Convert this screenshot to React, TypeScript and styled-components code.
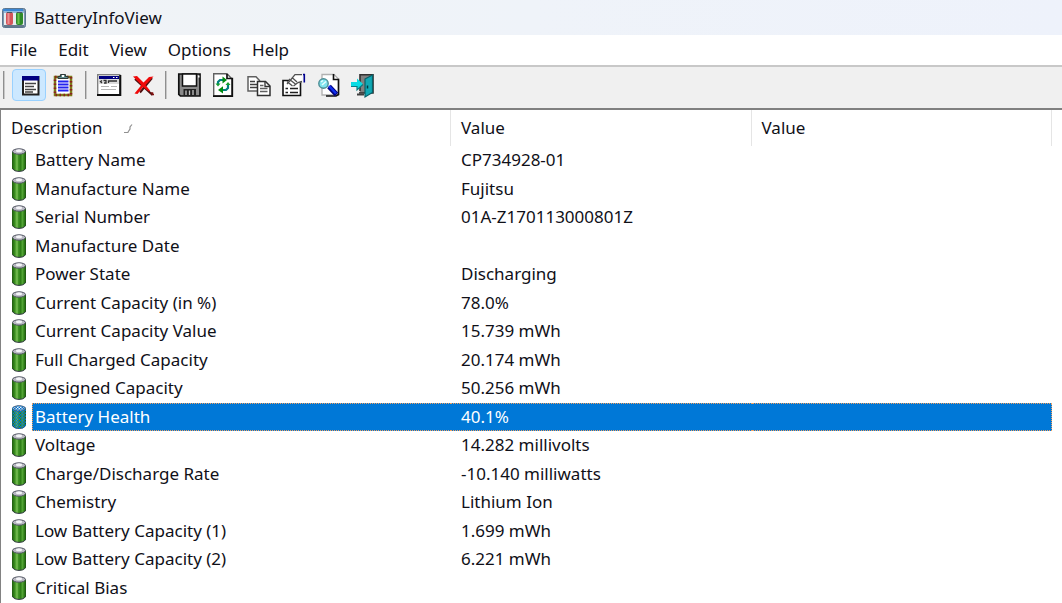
import React, { useState } from "react";
import styled, { createGlobalStyle } from "styled-components";

const GlobalStyle = createGlobalStyle`
  * { box-sizing: border-box; }
  body {
    margin: 0;
    overflow: hidden;
    background: #ffffff;
    color: #101018;
    font-family: "Noto Sans", "Open Sans", sans-serif;
    font-size: 17px;
  }
  button { font: inherit; color: inherit; }
`;

const Window = styled.main`
  display: flex;
  flex-direction: column;
  min-height: 100vh;
`;

const TitleBar = styled.header`
  display: flex;
  align-items: center;
  gap: 8px;
  height: 35px;
  padding-left: 2px;
  background: linear-gradient(90deg, #f0f3f6 0%, #eff3f9 50%, #eef2fb 100%);
`;

const Title = styled.h1`
  margin: 0;
  font-size: 17px;
  font-weight: 400;
  line-height: 24px;
`;

const MenuBar = styled.nav`
  display: flex;
  gap: 1px;
  height: 30px;
`;

const MenuItem = styled.button`
  padding: 0 10px;
  border: 0;
  background: transparent;
  line-height: 28px;
`;

const ToolBar = styled.div`
  display: flex;
  align-items: center;
  gap: 1px;
  height: 45px;
  padding-bottom: 6px;
  border-top: 2px solid #c8c8c8;
  border-bottom: 2px solid #808080;
  background: #f0f0f0;
`;

const Separator = styled.span`
  width: 2px;
  height: 28px;
  margin: 0 4px 0 3px;
  border-left: 1px solid #8f8f8f;
  border-right: 1px solid #c8c8c8;
`;

const Grip = styled(Separator)`
  margin-right: 6px;
`;

const ToolButton = styled.button<{ $active?: boolean }>`
  display: grid;
  place-items: center;
  width: 34px;
  height: 32px;
  padding: 0;
  border: 1px solid ${(p) => (p.$active ? "#99d1ff" : "transparent")};
  border-radius: 4px;
  background: ${(p) => (p.$active ? "#cce8ff" : "transparent")};
`;

const ToolGlyph = styled.svg`
  width: 24px;
  height: 24px;
  overflow: visible;
`;

const ListFrame = styled.section`
  flex: 1;
  border-left: 1px solid #828282;
`;

const List = styled.table`
  width: calc(100% - 10px);
  border-collapse: separate;
  border-spacing: 0;
  table-layout: fixed;
`;

const DescriptionColumn = styled.col`
  width: 450px;
`;

const HeadCell = styled.th`
  height: 36px;
  padding: 0 0 0 10px;
  border-right: 1px solid #e5e5e5;
  font-weight: 400;
  line-height: 24px;
  text-align: left;
`;

const SortMark = styled.svg`
  margin-left: 22px;
`;

const Row = styled.tr<{ $selected: boolean }>`
  height: 28px;
  color: ${(p) => (p.$selected ? "#ffffff" : "inherit")};
  &:nth-child(odd) { height: 29px; }
`;

const Cell = styled.td<{ $selected: boolean }>`
  padding: 0 0 0 10px;
  border: 1px dotted ${(p) => (p.$selected ? "#f0a060" : "transparent")};
  border-left: 0;
  background: ${(p) => (p.$selected ? "#0078d7" : "transparent")};
  line-height: 26px;
  vertical-align: top;
  white-space: nowrap;
  &:not(:last-child) { border-right: 0; }
`;

const NameCell = styled.td`
  padding: 0;
  vertical-align: top;
`;

const NameLine = styled.div`
  display: flex;
  align-items: center;
  padding-left: 10px;
`;

const Name = styled.span<{ $selected: boolean }>`
  flex: 1;
  height: 28px;
  margin-left: 5px;
  padding-left: 2px;
  border: 1px dotted ${(p) => (p.$selected ? "#f0a060" : "transparent")};
  border-right: 0;
  background: ${(p) => (p.$selected ? "#0078d7" : "transparent")};
  line-height: 26px;
  white-space: nowrap;
`;

const BatterySvg = styled.svg`
  flex: none;
`;

function AppIcon() {
  return (
    <svg width="24" height="20" viewBox="0 0 24 20" aria-hidden="true">
      <rect x="0.5" y="0.5" width="23" height="19" rx="2" fill="#7d96ad" stroke="#5b7690" />
      <path d="M1 2H21" stroke="#3a86d4" strokeWidth="2" />
      <path d="M2 4H22" stroke="#8fb8dd" strokeWidth="2" />
      <rect x="2" y="5" width="20" height="12" fill="#e6edef" />
      <rect x="4" y="4" width="7" height="13" rx="2" fill="#d5555a" />
      <path d="M6.500 5V16" stroke="#ee9094" strokeWidth="2" />
      <rect x="14" y="4" width="7" height="13" rx="2" fill="#2f8a28" />
      <path d="M16.500 5V16" stroke="#6cc44a" strokeWidth="2" />
      <path d="M5 4.500H10M15 4.500H20" stroke="#4c5660" />
      <path d="M2 18H22" stroke="#64798c" strokeWidth="2" />
    </svg>
  );
}

function BatteryDefs() {
  return (
    <svg width="0" height="0" style={{ position: "absolute" }} aria-hidden="true">
      <defs>
        <linearGradient id="cell" x1="0" x2="1" y1="0" y2="0">
          <stop offset="0" stopColor="#1f5a10" />
          <stop offset="0.2" stopColor="#3a8f1e" />
          <stop offset="0.36" stopColor="#7cc257" />
          <stop offset="0.46" stopColor="#3f9424" />
          <stop offset="0.62" stopColor="#2c7c16" />
          <stop offset="0.74" stopColor="#55a637" />
          <stop offset="0.88" stopColor="#2f7d18" />
          <stop offset="1" stopColor="#1b4d10" />
        </linearGradient>
        <pattern id="dither" width="3" height="3" patternUnits="userSpaceOnUse">
          <rect width="1.500" height="1.500" fill="#0078d7" />
          <rect x="1.500" y="1.500" width="1.500" height="1.500" fill="#0078d7" />
        </pattern>
      </defs>
    </svg>
  );
}

function BatteryIcon({ selected }: { selected: boolean }) {
  return (
    <BatterySvg width="16" height="24" viewBox="0 0 16 24" aria-hidden="true">
      <path d="M1 3.500V20.500Q2.500 23.500 8 23.500T15 20.500V3.500Z" fill="url(#cell)" />
      <path d="M1.500 20.500Q3 23.500 8 23.500T14.500 20.500" fill="none" stroke="#3b3f4c" />
      <ellipse cx="8" cy="3.500" rx="6.500" ry="2.700" fill="#b9b9c2" stroke="#4f5360" />
      <ellipse cx="8" cy="2.800" rx="3" ry="1.500" fill="#f4f4f8" />
      {selected && <path d="M1 3Q3 0.500 8 0.500T15 3V20.500Q13.500 24 8 24T1 20.500Z" fill="url(#dither)" />}
    </BatterySvg>
  );
}

type Tool = { label: string; active?: boolean; art: React.ReactNode };

const toolGroups: Tool[][] = [
  [
    {
      label: "Details view",
      active: true,
      art: (
        <>
          <rect x="6" y="4" width="15.500" height="17.500" fill="#fff" stroke="#202020" strokeWidth="2" />
          <rect x="5" y="3" width="17" height="4.500" fill="#000080" />
          <path d="M8 10.500H19M8 13.500H17M8 16.500H19M8 19H16" stroke="#454545" strokeWidth="1.300" />
        </>
      ),
    },
    {
      label: "Report",
      art: (
        <>
          <rect x="3" y="4" width="16" height="18" fill="#fff" stroke="#7d7a18" strokeWidth="2.500" />
          <rect x="3" y="4" width="16" height="18" fill="none" stroke="#8b2020" strokeWidth="2.500" strokeDasharray="1.500 2.500" />
          <path d="M6 8.500H16.500M6 11.500H16.500M6 14.500H16.500M6 17.500H16.500" stroke="#2424f0" strokeWidth="1.800" />
          <path d="M6 5.500V3.500H8.500V1.500H13.500V3.500H16V5.500Z" fill="#5f8f8f" stroke="#303838" />
          <rect x="10" y="2" width="2" height="2" fill="#fff" />
        </>
      ),
    },
  ],
  [
    {
      label: "Properties window",
      art: (
        <>
          <rect x="0.700" y="1.700" width="22" height="20" fill="#fff" stroke="#808080" strokeWidth="1.400" />
          <path d="M0 22H23.300V2" fill="none" stroke="#101010" strokeWidth="2" />
          <rect x="2" y="3" width="20" height="3" fill="#000080" />
          <path d="M16 4.500H17.500M19 4.500H20.500" stroke="#fff" />
          <rect x="2" y="6" width="20" height="5" fill="#dcdcdc" />
          <path d="M5 7.500L3.500 8.500L5 10M6.500 7.500H9V10H7M11.500 10V8H20" fill="none" stroke="#303030" strokeWidth="1.300" />
          <path d="M4 13.500H12M14 13.500H20M4 16.500H19" stroke="#b4b4b4" />
        </>
      ),
    },
    {
      label: "Delete",
      art: (
        <>
          <path d="M3 6L20.500 22M20 5L8 19.500" fill="none" stroke="#501010" strokeWidth="2" />
          <path d="M1 3.500L5 3L11.500 9.500L17 4L21.500 3.500L13.500 12L18 17.500L17 18.500L11 14L5.500 21L2.500 20.500L9.500 12Z" fill="#f00808" />
          <path d="M19 20H20.500V21.500H22" fill="none" stroke="#801010" strokeWidth="1.500" />
        </>
      ),
    },
  ],
  [
    {
      label: "Save",
      art: (
        <>
          <path d="M1.800 1H23V23H3.500L1.800 21.300Z" fill="#8a8a8a" stroke="#101010" strokeWidth="1.700" />
          <rect x="5.500" y="1" width="14" height="12" fill="#fff" stroke="#101010" strokeWidth="1.500" />
          <rect x="21" y="2.500" width="1.500" height="2" fill="#fff" />
          <path d="M6.500 23V16H19V23Z" fill="#202020" />
          <path d="M9 17.500V22M12.500 17.500V22M16 17V22" stroke="#c4c4c4" strokeWidth="1.300" />
        </>
      ),
    },
    {
      label: "Refresh",
      art: (
        <>
          <path d="M1.700 0.800H15L20 6V23H1.700Z" fill="#fff" stroke="#606060" strokeWidth="1.400" />
          <path d="M1 23.200H20.300V5.500H15V1" fill="none" stroke="#101010" strokeWidth="1.700" />
          <path d="M6 12V9L8 7H11" fill="none" stroke="#008080" strokeWidth="2.200" />
          <path d="M10.500 3.500L15 7L10.500 10.500Z" fill="#008a10" />
          <path d="M16 11V15L14 17H11" fill="none" stroke="#008080" strokeWidth="2.200" />
          <path d="M11 13.200V20.500L6 17Z" fill="#008a10" />
          <path d="M3.500 10.500H8.500L6 13.500ZM13.500 12L16 9L18.500 12Z" fill="#18a030" />
        </>
      ),
    },
    {
      label: "Copy",
      art: (
        <>
          <path d="M1 3.700H9L12.500 7.500V18H1Z" fill="#fff" stroke="#606060" strokeWidth="1.500" />
          <path d="M3 8.500H8M3 11.500H10M3 14.500H10" stroke="#404040" strokeWidth="1.300" />
          <path d="M10.500 8.500H18.500L23 13V22.500H10.500Z" fill="#fff" stroke="#303030" strokeWidth="1.500" />
          <path d="M18 8.500V13.500H23" fill="none" stroke="#303030" strokeWidth="1.300" />
          <path d="M13 12.500H16.500M13 15.500H20.500M13 18.500H20.500" stroke="#606060" strokeWidth="1.300" />
        </>
      ),
    },
    {
      label: "Properties",
      art: (
        <>
          <path d="M1 7.500H18.500V22.500H1Z" fill="#fff" stroke="#101010" strokeWidth="1.600" />
          <path d="M3.500 15.500H6M8 15.500H16M3.500 19.500H6M8 19.500H16" stroke="#202020" strokeWidth="1.700" />
          <path d="M4 10L9 6L12 2.500L14 1.500H20.500V8.500L17 10L12 11L11 13L9.500 12L7 13.500L5.500 12Z" fill="#fff" />
          <path d="M5 11L9 6.500L13 1.700H20M20 8.500L16 9.500L11.500 13M7 6L14 11.500M10 4.500L15 9M5 8.500L10.500 13" fill="none" stroke="#505050" strokeWidth="1.300" />
          <path d="M22.300 1V9.500M21 1.500H23" stroke="#000090" strokeWidth="1.600" />
        </>
      ),
    },
    {
      label: "Find",
      art: (
        <>
          <path d="M5 1.500H17L21.500 6V22H5Z" fill="#fff" stroke="#b0b0b0" strokeWidth="1.300" />
          <path d="M16.500 1V6.500H21.500V21.500L19 23H9" fill="none" stroke="#101010" strokeWidth="1.600" />
          <path d="M12 13.500L19.500 21.500" stroke="#000080" strokeWidth="5" />
          <path d="M12 13L19 20.500" stroke="#1030f0" strokeWidth="2.500" />
          <circle cx="6.500" cy="10.500" r="4.700" fill="#80e4ee" stroke="#4b8c94" strokeWidth="1.400" />
          <path d="M4 9L6 7.500M5 12L9 8.500" stroke="#e8ffff" strokeWidth="1.500" />
        </>
      ),
    },
    {
      label: "Exit",
      art: (
        <>
          <path d="M8 18V1.700H21V20H7" fill="#808080" stroke="#303030" strokeWidth="1.600" />
          <path d="M5 21.500H12" stroke="#404040" strokeWidth="2" />
          <path d="M13 6L20.500 2V19.500L13 24Z" fill="#10a8b4" stroke="#086068" strokeWidth="1.200" />
          <path d="M15.500 12.500V15.500" stroke="#003840" strokeWidth="1.500" />
          <path d="M-1 9H5V5.500L11 11L5 16.500V13H-1Z" fill="#08dce4" />
          <path d="M-1 13.500H5V17L11 11.500" fill="none" stroke="#087c84" strokeWidth="1.200" />
        </>
      ),
    },
  ],
];

const menus = ["File", "Edit", "View", "Options", "Help"];

const rows: [string, string][] = [
  ["Battery Name", "CP734928-01"],
  ["Manufacture Name", "Fujitsu"],
  ["Serial Number", "01A-Z170113000801Z"],
  ["Manufacture Date", ""],
  ["Power State", "Discharging"],
  ["Current Capacity (in %)", "78.0%"],
  ["Current Capacity Value", "15.739 mWh"],
  ["Full Charged Capacity", "20.174 mWh"],
  ["Designed Capacity", "50.256 mWh"],
  ["Battery Health", "40.1%"],
  ["Voltage", "14.282 millivolts"],
  ["Charge/Discharge Rate", "-10.140 milliwatts"],
  ["Chemistry", "Lithium Ion"],
  ["Low Battery Capacity (1)", "1.699 mWh"],
  ["Low Battery Capacity (2)", "6.221 mWh"],
  ["Critical Bias", ""],
];

export default function App() {
  const [selected, setSelected] = useState("Battery Health");
  return (
    <Window>
      <GlobalStyle />
      <BatteryDefs />
      <TitleBar>
        <AppIcon />
        <Title>BatteryInfoView</Title>
      </TitleBar>
      <MenuBar>
        {menus.map((menu) => (
          <MenuItem key={menu} type="button">{menu}</MenuItem>
        ))}
      </MenuBar>
      <ToolBar role="toolbar">
        <Grip />
        {toolGroups.map((group, index) => (
          <React.Fragment key={index}>
            {index > 0 && <Separator />}
            {group.map((tool) => (
              <ToolButton key={tool.label} type="button" aria-label={tool.label} $active={tool.active}>
                <ToolGlyph viewBox="0 0 24 24" aria-hidden="true">{tool.art}</ToolGlyph>
              </ToolButton>
            ))}
          </React.Fragment>
        ))}
      </ToolBar>
      <ListFrame>
        <List>
          <colgroup>
            <DescriptionColumn />
            <col />
            <col />
          </colgroup>
          <thead>
            <tr>
              <HeadCell scope="col">
                Description
                <SortMark width="9" height="10" viewBox="0 0 9 10" aria-hidden="true">
                  <path d="M0 8.500H4.500M4 8L6 5V3L8 0.500" fill="none" stroke="#909090" strokeWidth="1.200" />
                </SortMark>
              </HeadCell>
              <HeadCell scope="col">Value</HeadCell>
              <HeadCell scope="col">Value</HeadCell>
            </tr>
          </thead>
          <tbody>
            {rows.map(([name, value]) => {
              const on = name === selected;
              return (
                <Row key={name} $selected={on} onClick={() => setSelected(name)}>
                  <NameCell>
                    <NameLine>
                      <BatteryIcon selected={on} />
                      <Name $selected={on}>{name}</Name>
                    </NameLine>
                  </NameCell>
                  <Cell $selected={on}>{value}</Cell>
                  <Cell $selected={on} />
                </Row>
              );
            })}
          </tbody>
        </List>
      </ListFrame>
    </Window>
  );
}
